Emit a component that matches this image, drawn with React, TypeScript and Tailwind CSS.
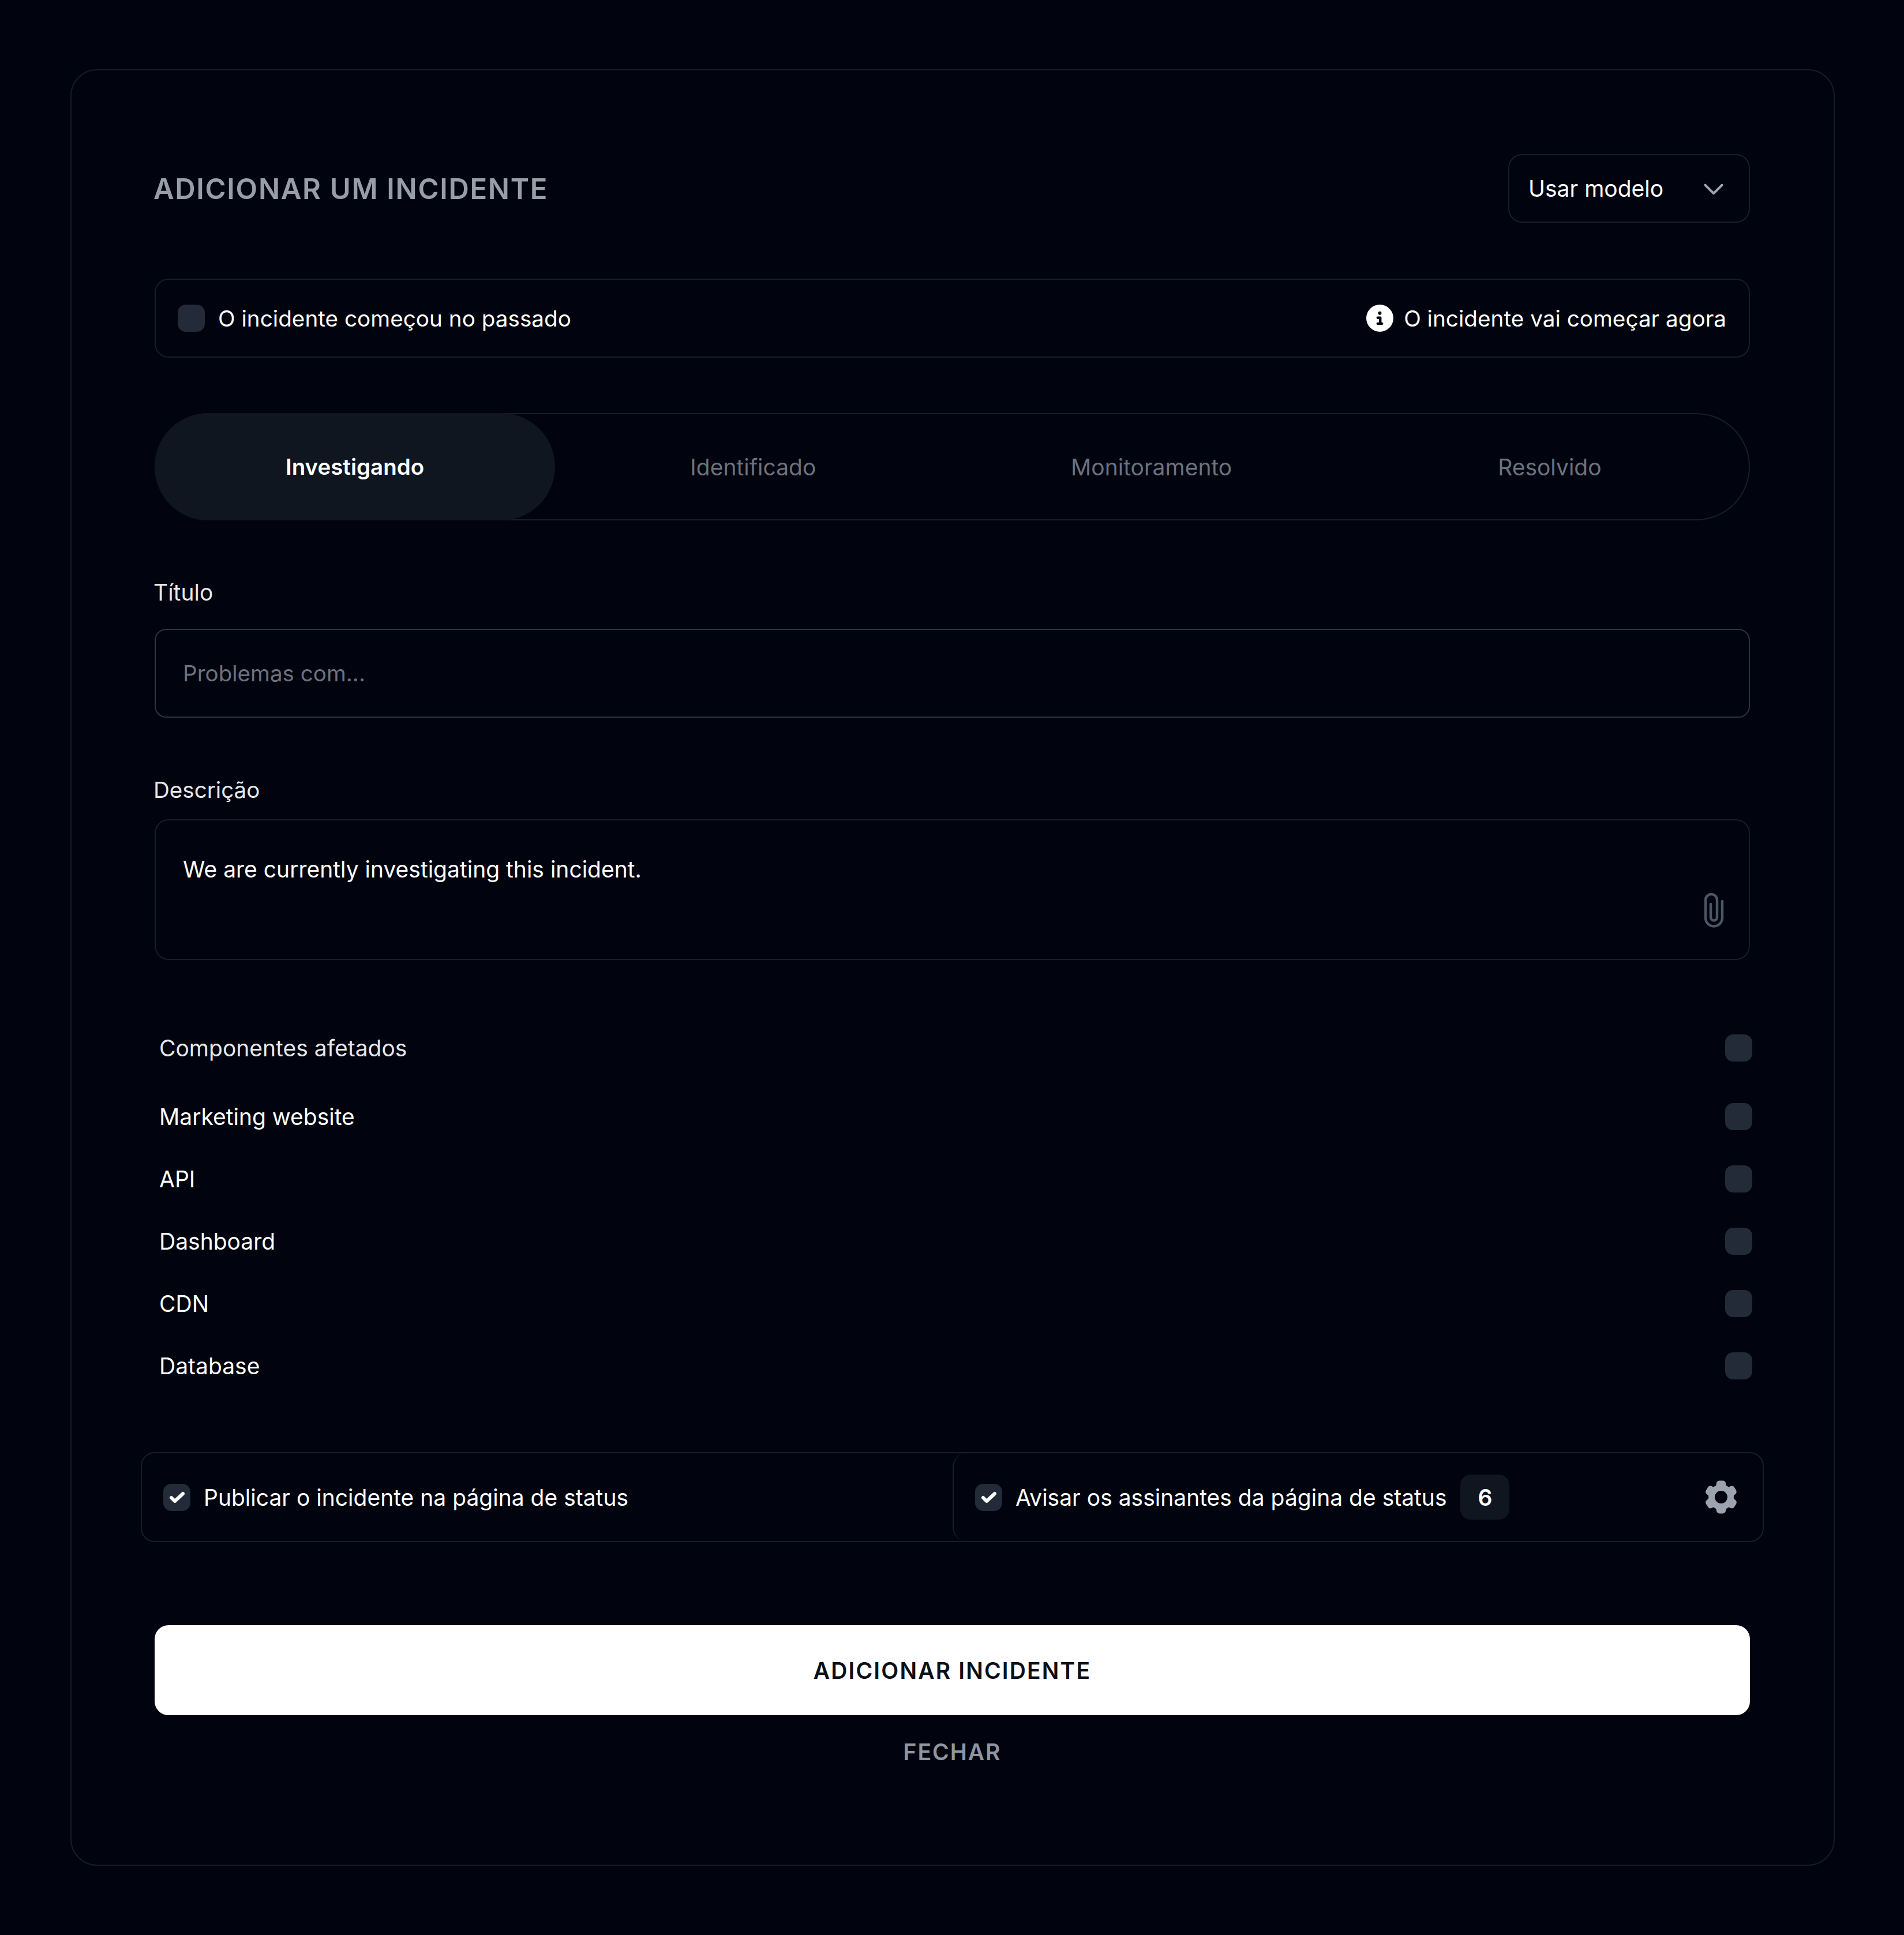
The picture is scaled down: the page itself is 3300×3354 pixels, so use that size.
import React from 'react';
import { FaCircleInfo } from 'react-icons/fa6';
import { HiOutlineChevronDown } from 'react-icons/hi';
import { HiCog6Tooth } from 'react-icons/hi2';

const tabs = ['Investigando', 'Identificado', 'Monitoramento', 'Resolvido'];
const components = ['Marketing website', 'API', 'Dashboard', 'CDN', 'Database'];

function Box({ checked }: { checked?: boolean }) {
  return (
    <span className="flex h-[47px] w-[47px] shrink-0 items-center justify-center rounded-[14px] bg-[#232b38] text-white">
      {checked && (
        <svg width="28" height="21" viewBox="0 0 28 21" fill="none" stroke="currentColor" strokeWidth="6" strokeLinecap="round" strokeLinejoin="round">
          <path d="M4 11L10 17L24 4" />
        </svg>
      )}
    </span>
  );
}

export default function App() {
  return (
    <div className="min-h-[3354px] bg-[#01040e] pl-[122px] pr-[120px] pt-[120px] font-['Inter',sans-serif] text-[39px] text-white">
      <div className="h-[3114px] rounded-[46px] border-2 border-[#151c2a] pl-[144px] pr-[145px] pt-[145px]">
        {/* header */}
        <div className="flex items-center justify-between">
          <h1 className="-ml-[2px] pt-[2px] text-[49px] font-semibold tracking-[0.034em] text-[#989ea9]">ADICIONAR UM INCIDENTE</h1>
          <button className="flex h-[119px] w-[419px] items-center justify-between rounded-[24px] border-2 border-[#161e2d] pl-[33px] pr-[36px]">
            <span className="pt-[2px]">Usar modelo</span>
            <HiOutlineChevronDown size={50} className="text-[#9ca3af]" />
          </button>
        </div>

        {/* start time */}
        <div className="mt-[97px] flex h-[137px] items-center justify-between rounded-[24px] border-2 border-[#161e2d] pl-[38px] pr-[39px] text-[38.7px]">
          <div className="flex items-center gap-[23px]">
            <Box />
            <span className="pt-[2px]">O incidente começou no passado</span>
          </div>
          <div className="flex items-center gap-[18px]">
            <FaCircleInfo size={47} />
            <span className="pt-[2px]">O incidente vai começar agora</span>
          </div>
        </div>

        {/* status tabs */}
        <div className="mt-[96px] grid h-[186px] grid-cols-4 rounded-full border-2 border-[#161e2d]">
          {tabs.map((tab, i) => (
            <div
              key={tab}
              className={`-m-[2px] flex items-center justify-center rounded-full pt-[2px] ${
                i === 0 ? 'bg-[#0f161f] text-[38.5px] font-semibold text-white' : 'text-[#6b7280]'
              }`}
            >
              {tab}
            </div>
          ))}
        </div>

        {/* title */}
        <label className="-ml-[2px] mt-[99px] mb-[37px] block leading-[52px] text-[#e5e7eb]">Título</label>
        <div className="flex h-[154px] items-center rounded-[20px] border-2 border-[#2b3443] pl-[47px] pr-[48px] pt-[2px] text-[38.6px] text-[#6b7280]">
          Problemas com...
        </div>

        {/* description */}
        <label className="-ml-[2px] mt-[99px] mb-[25px] block text-[38.6px] leading-[52px] text-[#e5e7eb]">Descrição</label>
        <div className="relative h-[244px] rounded-[24px] border-2 border-[#161e2d] pl-[47px] pr-[48px] pt-[59px] leading-[52px]">
          We are currently investigating this incident.
          <svg
            className="absolute right-[43px] bottom-[54px] text-[#4b5563]"
            width="34"
            height="60"
            viewBox="0 0 34 60"
            fill="none"
            stroke="currentColor"
            strokeWidth="4.5"
            strokeLinecap="round"
          >
            <path d="M31 14V43A14.5 14.5 0 0 1 2 43V12A10 10 0 0 1 22 12V42A5.5 5.5 0 0 1 11 42V19" />
          </svg>
        </div>

        {/* affected components */}
        <div className="mt-[98px] -mr-[4px] pl-[8px]">
          <div className="mb-[11px] flex h-[108px] items-center justify-between text-[#e5e7eb]">
            <span className="pt-[3px]">Componentes afetados</span>
            <Box />
          </div>
          {components.map((name) => (
            <div key={name} className="flex h-[108px] items-center justify-between">
              <span className="pt-[3px]">{name}</span>
              <Box />
            </div>
          ))}
        </div>

        {/* publish options */}
        <div className="-ml-[24px] -mr-[24px] mt-[96px] flex h-[156px] rounded-[24px] border-2 border-[#161e2d]">
          <div className="flex w-[1405px] items-center gap-[23px] pl-[37px]">
            <Box checked />
            <span className="pt-[2px]">Publicar o incidente na página de status</span>
          </div>
          <div className="flex flex-1 items-center rounded-[24px] border-l-2 border-[#161e2d] pl-[37px] pr-[37px]">
            <Box checked />
            <span className="ml-[23px] pt-[2px]">Avisar os assinantes da página de status</span>
            <span className="ml-[24px] flex h-[78px] w-[85px] items-center justify-center rounded-[18px] bg-[#0f161f] pt-[2px] font-semibold">6</span>
            <HiCog6Tooth size={70} className="ml-auto text-[#9ca3af]" />
          </div>
        </div>

        {/* actions */}
        <button className="mt-[144px] flex h-[156px] w-full items-center justify-center rounded-[24px] bg-white pt-[2px] font-semibold tracking-[0.055em] text-[#0b0f17]">
          ADICIONAR INCIDENTE
        </button>
        <div className="mt-[32px] text-center font-semibold tracking-[0.05em] leading-[64px] text-[#8f95a1]">FECHAR</div>
      </div>
    </div>
  );
}
